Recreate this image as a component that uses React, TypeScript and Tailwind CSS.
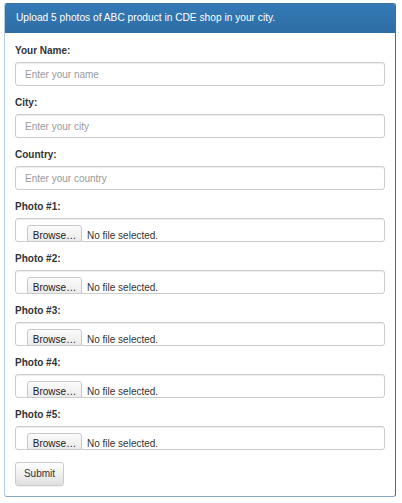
import React from "react";

const font = { fontFamily: '"Liberation Sans", Arial, Helvetica, sans-serif' };

function TextField({ label, placeholder }: { label: string; placeholder: string }) {
  return (
    <div className="mb-[10px]">
      <div className="h-[14px] mb-[4px] text-[10px] leading-[14px] font-bold text-[#333]">{label}</div>
      <div className="h-[24px] rounded-[3px] border border-[#ccc] bg-white flex items-center pl-[9px] text-[10px] text-[#999] shadow-[inset_0_1px_1px_rgba(0,0,0,0.075)]">
        {placeholder}
      </div>
    </div>
  );
}

function FileField({ label }: { label: string }) {
  return (
    <div className="mb-[10px]">
      <div className="h-[14px] mb-[4px] text-[10px] leading-[14px] font-bold text-[#333]">{label}</div>
      <div className="h-[24px] rounded-[3px] border border-[#ccc] bg-white overflow-hidden pl-[11px] shadow-[inset_0_1px_1px_rgba(0,0,0,0.075)]">
        <div className="flex items-start pt-[6px]">
          <div className="w-[55px] h-[22px] rounded-[3px] border border-[#c8c8c8] bg-gradient-to-b from-[#fbfbfb] to-[#e6e6e6] text-[10px] leading-[14px] text-[#222] text-center pt-[3px]">
            Browse…
          </div>
          <div className="ml-[5px] text-[10px] leading-[14px] text-[#333] pt-[4px]">No file selected.</div>
        </div>
      </div>
    </div>
  );
}

export default function App() {
  return (
    <div className="w-[402px] h-[503px] bg-white pt-[3px] pl-[4px]" style={font}>
      <div className="w-[392px] h-[494px] rounded-[3px] border border-[#3f6f9d] border-l-[#b3cde2] border-b-[#86a7c6] bg-white overflow-hidden">
        <div className="h-[29px] bg-gradient-to-b from-[#337ab7] to-[#2e6da4] border-b border-[#2e6da4] flex items-center pl-[11px] text-[10.2px] text-white">
          Upload 5 photos of ABC product in CDE shop in your city.
        </div>
        <div className="px-[10px] pt-[11px]">
          <TextField label="Your Name:" placeholder="Enter your name" />
          <TextField label="City:" placeholder="Enter your city" />
          <TextField label="Country:" placeholder="Enter your country" />
          <FileField label="Photo #1:" />
          <FileField label="Photo #2:" />
          <FileField label="Photo #3:" />
          <FileField label="Photo #4:" />
          <FileField label="Photo #5:" />
          <button className="w-[49px] h-[24px] rounded-[3px] border border-[#ccc] bg-gradient-to-b from-white to-[#e0e0e0] text-[10px] text-[#333] shadow-[0_1px_1px_rgba(0,0,0,0.05)]">
            Submit
          </button>
        </div>
      </div>
    </div>
  );
}
